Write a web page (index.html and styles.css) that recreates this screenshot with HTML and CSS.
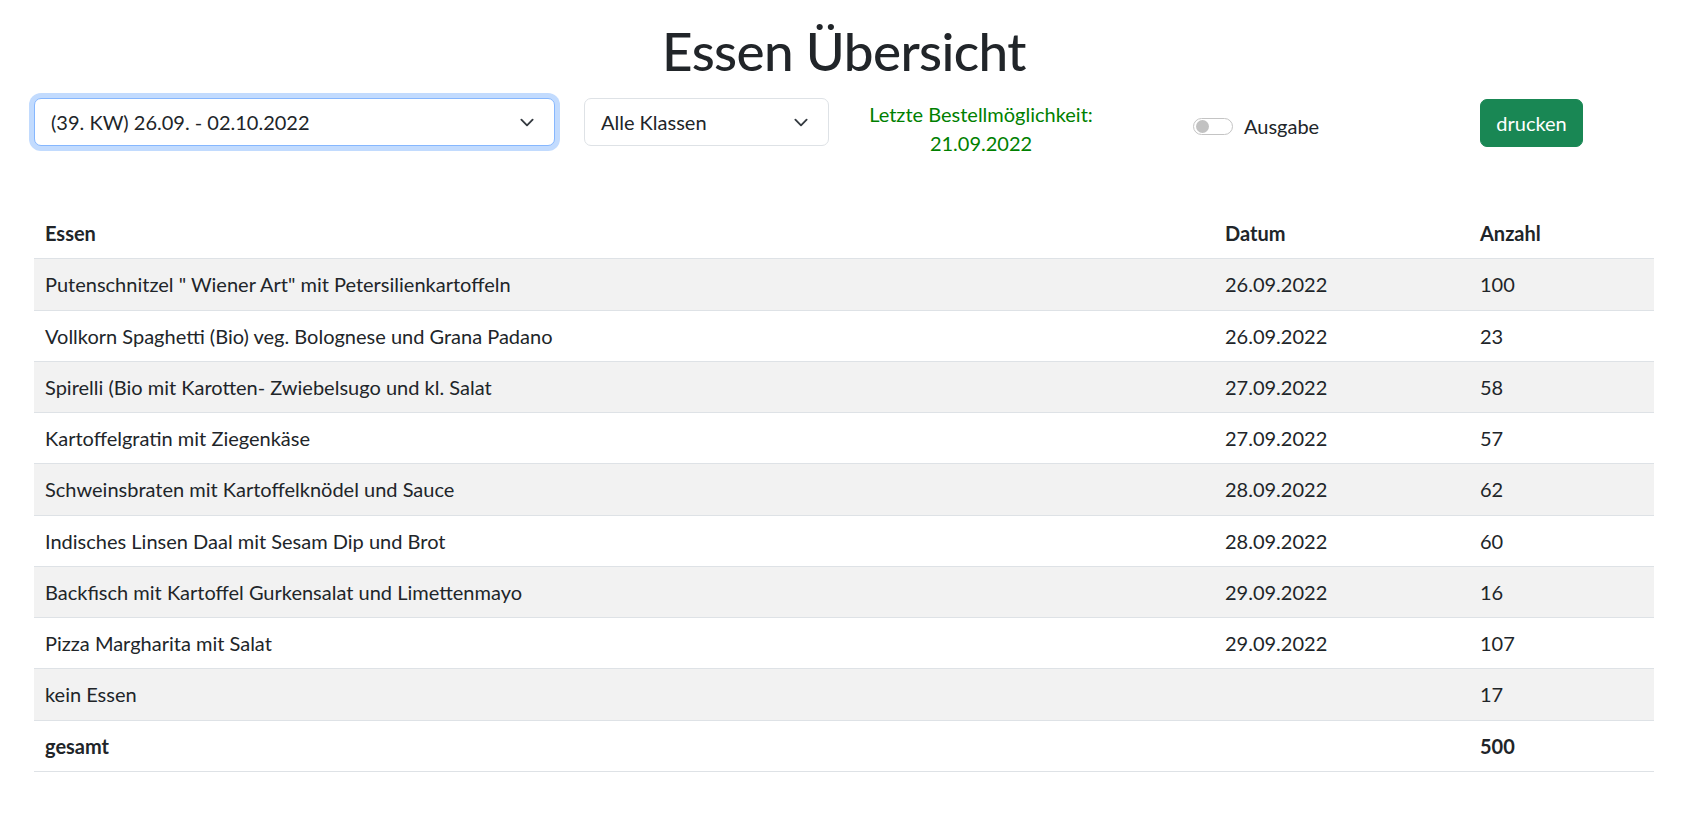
FILE: index.html
```html
<!DOCTYPE html>
<html lang="de">
<head>
<meta charset="utf-8">
<title>Essen Übersicht</title>
<link rel="stylesheet" href="styles.css">
</head>
<body>
<div class="page">
  <h1 class="title">Essen Übersicht</h1>
  <div class="controls">
    <div class="cell cell-week">
      <div class="select select-focus">
        <span>(39. KW) 26.09. - 02.10.2022</span>
        <svg class="chev" viewBox="0 0 16 16"><path d="m2 5 6 6 6-6" fill="none" stroke="#343a40" stroke-linecap="round" stroke-linejoin="round" stroke-width="2"/></svg>
      </div>
    </div>
    <div class="cell cell-class">
      <div class="select">
        <span>Alle Klassen</span>
        <svg class="chev" viewBox="0 0 16 16"><path d="m2 5 6 6 6-6" fill="none" stroke="#343a40" stroke-linecap="round" stroke-linejoin="round" stroke-width="2"/></svg>
      </div>
    </div>
    <div class="cell cell-deadline">
      <div>Letzte Bestellmöglichkeit:</div>
      <div>21.09.2022</div>
    </div>
    <div class="cell cell-switch">
      <span class="switch"><span class="knob"></span></span>
      <span class="switch-label">Ausgabe</span>
    </div>
    <div class="cell cell-print">
      <button class="btn">drucken</button>
    </div>
  </div>
  <table class="table">
    <colgroup>
      <col class="col-essen">
      <col class="col-datum">
      <col class="col-anzahl">
    </colgroup>
    <thead>
      <tr><th>Essen</th><th>Datum</th><th>Anzahl</th></tr>
    </thead>
    <tbody>
      <tr><td>Putenschnitzel " Wiener Art" mit Petersilienkartoffeln</td><td>26.09.2022</td><td>100</td></tr>
      <tr><td>Vollkorn Spaghetti (Bio) veg. Bolognese und Grana Padano</td><td>26.09.2022</td><td>23</td></tr>
      <tr><td>Spirelli (Bio mit Karotten- Zwiebelsugo und kl. Salat</td><td>27.09.2022</td><td>58</td></tr>
      <tr><td>Kartoffelgratin mit Ziegenkäse</td><td>27.09.2022</td><td>57</td></tr>
      <tr><td>Schweinsbraten mit Kartoffelknödel und Sauce</td><td>28.09.2022</td><td>62</td></tr>
      <tr><td>Indisches Linsen Daal mit Sesam Dip und Brot</td><td>28.09.2022</td><td>60</td></tr>
      <tr><td>Backfisch mit Kartoffel Gurkensalat und Limettenmayo</td><td>29.09.2022</td><td>16</td></tr>
      <tr><td>Pizza Margharita mit Salat</td><td>29.09.2022</td><td>107</td></tr>
      <tr><td>kein Essen</td><td></td><td>17</td></tr>
      <tr class="total"><td>gesamt</td><td></td><td>500</td></tr>
    </tbody>
  </table>
</div>
</body>
</html>
```
FILE: styles.css
```css
html, body {
  margin: 0;
  padding: 0;
  background: #ffffff;
}
body {
  font-family: "Lato", "Noto Sans", sans-serif;
  font-size: 20px;
  line-height: 30px;
  color: #212529;
}
.page {
  padding: 0 33px 0 34px;
}
.title {
  margin: 0;
  padding-top: 15px;
  height: 71px;
  font-size: 53px;
  line-height: 72px;
  letter-spacing: -0.6px;
  font-weight: 500;
  text-align: center;
  color: #212529;
}
.controls {
  display: grid;
  grid-template-columns: 550px 245px 304px 347px 103px;
  align-items: start;
  margin-top: 12px;
}
.select {
  box-sizing: border-box;
  height: 48px;
  border: 1px solid #dee2e6;
  border-radius: 7px;
  padding: 8px 17px 8px 16px;
  display: flex;
  align-items: center;
  justify-content: space-between;
  background: #fff;
}
.cell-week .select {
  width: 521px;
}
.select-focus {
  border-color: #86b7fe;
  box-shadow: 0 0 0 5px rgba(13, 110, 253, 0.25);
}
.chev {
  width: 20px;
  height: 15px;
  flex: none;
}
.cell-deadline {
  padding-top: 2px;
  text-align: center;
  color: #008000;
  line-height: 29px;
}
.cell-switch {
  height: 52px;
  padding-left: 60px;
  padding-top: 4px;
  box-sizing: border-box;
  display: flex;
  align-items: center;
  gap: 11px;
}
.switch {
  box-sizing: border-box;
  width: 40px;
  height: 17px;
  border: 1px solid #c4c4c4;
  border-radius: 9px;
  display: flex;
  align-items: center;
  padding-left: 2px;
  margin-top: 1px;
}
.knob {
  width: 13px;
  height: 13px;
  border-radius: 50%;
  background: #c2c2c2;
}
.btn {
  margin-top: 1px;
  box-sizing: border-box;
  height: 48px;
  width: 103px;
  padding: 8px 0;
  border: 1px solid #198754;
  border-radius: 7px;
  background: #198754;
  color: #fff;
  font-family: inherit;
  font-size: 20px;
  line-height: 30px;
}
.table {
  margin-top: 50px;
  width: 100%;
  border-collapse: collapse;
}
.col-essen { width: 1180px; }
.col-datum { width: 255px; }
.col-anzahl { width: 185px; }
.table th,
.table td {
  text-align: left;
  padding: 10.125px 11px;
  border-bottom: 1px solid #dee2e6;
  vertical-align: top;
}
.table th {
  font-weight: 700;
}
.table tbody tr:nth-child(odd) td {
  background: #f2f2f2;
}
.table tr.total td {
  font-weight: 700;
}
```
